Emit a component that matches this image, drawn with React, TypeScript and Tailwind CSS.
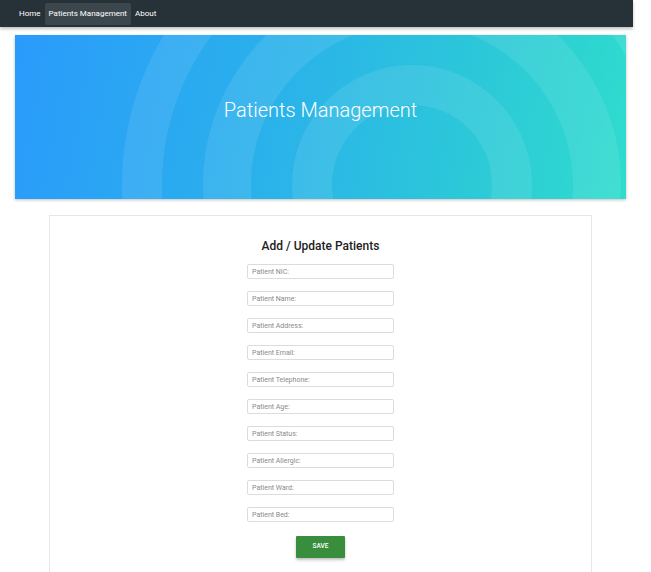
import React from "react";

const fields = [
  "Patient NIC:",
  "Patient Name:",
  "Patient Address:",
  "Patient Email:",
  "Patient Telephone:",
  "Patient Age:",
  "Patient Status:",
  "Patient Allergic:",
  "Patient Ward:",
  "Patient Bed:",
];

const Rings = () => (
  <svg className="pointer-events-none absolute inset-0" width="611" height="164" viewBox="0 0 611 164">
    {[100, 185, 270].map((r) => (
      <circle key={r} cx="397" cy="150" r={r} fill="none" stroke="#ffffff" strokeOpacity="0.09" strokeWidth={r === 185 ? 48 : 40} />
    ))}
  </svg>
);

export default function App() {
  const [values, setValues] = React.useState<Record<string, string>>({});

  return (
    <div className="min-h-screen w-[633px] bg-white pb-4" style={{ fontFamily: "Roboto, 'Liberation Sans', sans-serif" }}>
      <nav className="flex h-[27px] items-center bg-[#263238] pl-[15px] text-[8px] text-white shadow-[0_2px_3px_rgba(0,0,0,0.25)]">
        <a className="px-[4px] py-[5px]">Home</a>
        <a className="rounded-[2px] bg-[#3c474d] px-[4px] py-[5px]">Patients Management</a>
        <a className="px-[4px] py-[5px]">About</a>
      </nav>

      <header className="relative ml-[15px] mt-[8px] flex h-[164px] w-[611px] items-center justify-center overflow-hidden bg-[linear-gradient(100deg,#2a9bfb_0%,#2ab0ec_40%,#2cc9d8_75%,#2fdccd_100%)] shadow-[0_1px_3px_rgba(0,0,0,0.25)]">
        <Rings />
        <h1 className="relative -mt-[14px] text-[20px] font-light text-white">Patients Management</h1>
      </header>

      <section className="ml-[49px] mt-[16px] w-[543px] border border-[#e6e6e6] px-4 pb-[30px] pt-[21px]">
        <h2 className="text-center text-[12px] font-medium text-[#222]">Add / Update Patients</h2>
        <form className="mt-[9px] flex flex-col items-center gap-[12px]" onSubmit={(e) => e.preventDefault()}>
          {fields.map((f) => (
            <input
              key={f}
              placeholder={f}
              value={values[f] ?? ""}
              onChange={(e) => setValues({ ...values, [f]: e.target.value })}
              className="h-[15px] w-[147px] rounded-[2px] border border-[#dcdcdc] px-[4px] text-[7px] text-[#444] outline-none placeholder:text-[#8a8a8a]"
            />
          ))}
          <button
            type="submit"
            className="mt-[2px] h-[22px] w-[49px] rounded-[1px] bg-[#388e3c] text-[6.5px] font-medium text-white shadow-[0_2px_3px_rgba(0,0,0,0.25)]"
          >
            SAVE
          </button>
        </form>
      </section>
    </div>
  );
}
